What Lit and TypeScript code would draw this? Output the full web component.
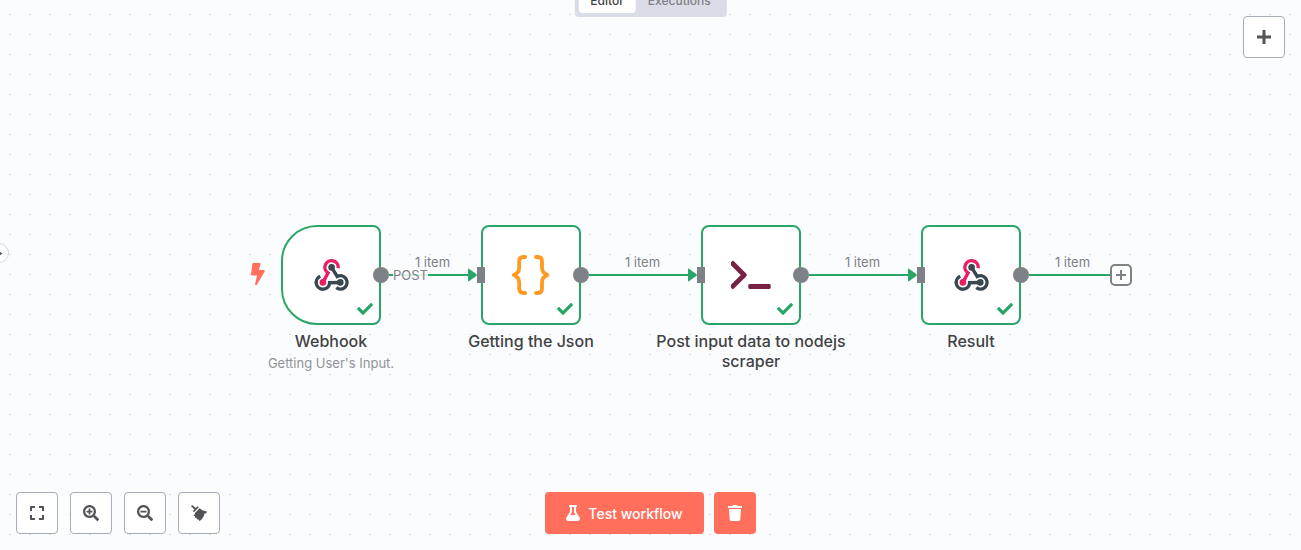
import { LitElement, html, svg, css, nothing } from "lit";
import { customElement, property } from "lit/decorators.js";

type IconName = "webhook" | "code" | "terminal";

interface FlowNode {
  name: string;
  note?: string;
  icon: IconName;
  x: number;
  y: number;
  trigger?: boolean;
}

interface FlowEdge {
  x: number;
  y: number;
  width: number;
  output?: string;
  open?: boolean;
}

const NODES: FlowNode[] = [
  { name: "Webhook", note: "Getting User's Input.", icon: "webhook", x: 281, y: 225, trigger: true },
  { name: "Getting the Json", icon: "code", x: 481, y: 225 },
  { name: "Post input data to nodejs scraper", icon: "terminal", x: 701, y: 225 },
  { name: "Result", icon: "webhook", x: 921, y: 225 },
];

const EDGES: FlowEdge[] = [
  { x: 381, y: 275, width: 104, output: "POST" },
  { x: 581, y: 275, width: 124 },
  { x: 801, y: 275, width: 124 },
  { x: 1021, y: 275, width: 104, open: true },
];

const GLYPHS = {
  bolt: { box: "0 0 320 512", d: "M296 160H180.6l42.6-129.8C227.2 15 215.7 0 200 0H56C44 0 33.8 8.9 32.2 20.8l-32 240C-1.7 275.2 9.5 288 24 288h118.7L96.6 482.5c-3.6 15.2 8 29.5 23.3 29.5 8.4 0 16.4-4.4 20.8-12l176-304c9.3-15.9-2.2-36-20.7-36z" },
  check: { box: "0 0 512 512", d: "M173.898 439.404l-166.4-166.4c-9.997-9.997-9.997-26.206 0-36.204l36.203-36.204c9.997-9.998 26.207-9.998 36.204 0L192 312.69 432.095 72.596c9.997-9.997 26.207-9.997 36.204 0l36.203 36.204c9.997 9.997 9.997 26.206 0 36.204l-294.4 294.401c-9.998 9.997-26.207 9.997-36.204-.001z" },
  expand: { box: "0 0 448 512", d: "M0 180V56c0-13.3 10.7-24 24-24h124c6.6 0 12 5.4 12 12v40c0 6.6-5.4 12-12 12H64v84c0 6.6-5.4 12-12 12H12c-6.6 0-12-5.4-12-12zM288 44v40c0 6.6 5.4 12 12 12h84v84c0 6.6 5.4 12 12 12h40c6.6 0 12-5.4 12-12V56c0-13.3-10.7-24-24-24H300c-6.6 0-12 5.4-12 12zm148 276h-40c-6.6 0-12 5.4-12 12v84h-84c-6.6 0-12 5.4-12 12v40c0 6.6 5.4 12 12 12h124c13.3 0 24-10.7 24-24V332c0-6.6-5.4-12-12-12zM160 468v-40c0-6.6-5.4-12-12-12H64v-84c0-6.6-5.4-12-12-12H12c-6.6 0-12 5.4-12 12v124c0 13.3 10.7 24 24 24h124c6.6 0 12-5.4 12-12z" },
  zoomIn: { box: "0 0 512 512", d: "M304 192v32c0 6.6-5.4 12-12 12h-56v56c0 6.6-5.4 12-12 12h-32c-6.6 0-12-5.4-12-12v-56h-56c-6.6 0-12-5.4-12-12v-32c0-6.6 5.4-12 12-12h56v-56c0-6.6 5.4-12 12-12h32c6.6 0 12 5.4 12 12v56h56c6.6 0 12 5.4 12 12zm201 284.7L476.7 505c-9.4 9.4-24.6 9.4-33.9 0L343 405.3c-4.5-4.5-7-10.6-7-17V372c-35.3 27.6-79.7 44-128 44C93.1 416 0 322.9 0 208S93.1 0 208 0s208 93.1 208 208c0 48.3-16.4 92.7-44 128h16.3c6.4 0 12.5 2.5 17 7l99.7 99.7c9.3 9.4 9.3 24.6 0 34zM344 208c0-75.2-60.8-136-136-136S72 132.8 72 208s60.8 136 136 136 136-60.8 136-136z" },
  zoomOut: { box: "0 0 512 512", d: "M304 192v32c0 6.6-5.4 12-12 12H124c-6.6 0-12-5.4-12-12v-32c0-6.6 5.4-12 12-12h168c6.6 0 12 5.4 12 12zm201 284.7L476.7 505c-9.4 9.4-24.6 9.4-33.9 0L343 405.3c-4.5-4.5-7-10.6-7-17V372c-35.3 27.6-79.7 44-128 44C93.1 416 0 322.9 0 208S93.1 0 208 0s208 93.1 208 208c0 48.3-16.4 92.7-44 128h16.3c6.4 0 12.5 2.5 17 7l99.7 99.7c9.3 9.4 9.3 24.6 0 34zM344 208c0-75.2-60.8-136-136-136S72 132.8 72 208s60.8 136 136 136 136-60.8 136-136z" },
  tidy: { box: "0 0 16 16", d: "M1.1 .1 4.9 3.1 6.7 1.2 7.8 2.3 3 7.2 1.9 6.1 3.6 4.4 0 1.3ZM8.6 3.2 11.2 5.2 15.8 6.4 15.3 8.4 13.7 8.2C13.2 11.4 11.4 14 8.6 16L7.2 14.3 6.2 14.5 5.4 12.8 4.1 12.8 4 11.2 2.4 10.4C3.4 9.9 3.9 9.1 4 8Z" },
  flask: { box: "0 0 448 512", d: "M437.2 403.5L320 215V64h8c13.3 0 24-10.7 24-24V24c0-13.3-10.7-24-24-24H120c-13.3 0-24 10.7-24 24v16c0 13.3 10.7 24 24 24h8v151L10.8 403.5C-18.5 450.6 15.3 512 70.9 512h306.2c55.7 0 89.4-61.5 60.1-108.5zM137.9 320l48.2-77.6c3.7-5.2 5.8-11.6 5.8-18.4V64h64v160c0 6.9 2.2 13.2 5.8 18.4l48.2 77.6h-172z" },
  trash: { box: "0 0 448 512", d: "M432 32H312l-9.4-18.7A24 24 0 0 0 281.1 0H166.8a23.72 23.72 0 0 0-21.4 13.3L136 32H16A16 16 0 0 0 0 48v32a16 16 0 0 0 16 16h416a16 16 0 0 0 16-16V48a16 16 0 0 0-16-16zM53.2 467a48 48 0 0 0 47.9 45h245.8a48 48 0 0 0 47.9-45L416 128H32z" },
  plus: { box: "0 0 16 16", d: "M6.5 1h3v5.5H15v3H9.5V15h-3V9.5H1v-3h5.5z" },
  right: { box: "0 0 16 16", d: "M7 2 15 8 7 14V11H0V5h7z" },
};

const glyph = (name: keyof typeof GLYPHS, size = 16) => html`
  <svg viewBox=${GLYPHS[name].box} height=${size} fill="currentColor" aria-hidden="true">
    <path d=${GLYPHS[name].d}></path>
  </svg>`;

const hook = "M27.2 13.2A6.7 6.7 0 1 0 17 18L11.9 27.4";

const nodeIcons = {
  webhook: svg`
    <g fill="none" stroke-width="3.4">
      <path d=${hook} stroke="#37474f" transform="rotate(-120 20.6 22.4)"></path>
      <path d=${hook} stroke="#37474f" transform="rotate(120 20.6 22.4)"></path>
      <path d=${hook} stroke="#e91e63"></path>
    </g>
    <circle cx="20.6" cy="12.4" r="3.3" fill="#37474f"></circle>
    <circle cx="29.3" cy="27.4" r="3.3" fill="#37474f"></circle>
    <circle cx="11.9" cy="27.4" r="3.3" fill="#e91e63"></circle>`,
  code: svg`
    <g fill="none" stroke="#ff9922" stroke-width="3.8" stroke-linecap="round" stroke-linejoin="round">
      <path d="M14.2 2H12.4Q8.2 2 8.2 6.2V12.5C8.2 16.5 6.5 18.7 2.7 20C6.5 21.3 8.2 23.5 8.2 27.5V33.8Q8.2 38 12.4 38H14.2"></path>
      <path d="M25 2H26.8Q31 2 31 6.2V12.5C31 16.5 32.7 18.7 36.5 20C32.7 21.3 31 23.5 31 27.5V33.8Q31 38 26.8 38H25"></path>
    </g>`,
  terminal: svg`
    <path d="M1.9 8.8 13.2 20 1.9 31.2" fill="none" stroke="#772244" stroke-width="4.8" stroke-linejoin="round" stroke-linecap="square"></path>
    <rect x="17.3" y="29" width="22.4" height="5" rx="1.4" fill="#772244"></rect>`,
};

@customElement("flow-node")
class FlowNodeElement extends LitElement {
  @property({ attribute: false }) node!: FlowNode;

  static styles = css`
    :host { display: block; position: absolute; width: 100px; }
    .card {
      position: relative;
      box-sizing: border-box;
      display: grid;
      place-items: center;
      height: 100px;
      border: 2px solid #29a568;
      border-radius: 8px;
      background: #fff;
    }
    .card.trigger { border-radius: 36px 8px 8px 36px; }
    .picture { width: 40px; height: 40px; }
    .status { position: absolute; right: 6px; bottom: 6px; display: flex; color: #29a568; }
    .bolt { position: absolute; right: 100%; top: 36px; margin-right: 18px; display: flex; color: #ff6f5c; }
    .caption {
      display: flex;
      flex-direction: column;
      gap: 4px;
      align-items: center;
      width: 200px;
      margin: 6px -50px 0;
      text-align: center;
    }
    .name { font-size: 16px; line-height: 20px; font-weight: 500; color: #414244; }
    .note { font-size: 13px; line-height: 16px; color: #909298; }
    svg { display: block; }
  `;

  render() {
    const { name, note, icon, trigger } = this.node;
    return html`
      <div class="card ${trigger ? "trigger" : ""}">
        ${trigger ? html`<span class="bolt">${glyph("bolt", 22)}</span>` : nothing}
        <svg class="picture" viewBox="0 0 40 40" aria-hidden="true">${nodeIcons[icon]}</svg>
        <span class="status">${glyph("check")}</span>
      </div>
      <div class="caption">
        <span class="name">${name}</span>
        ${note ? html`<span class="note">${note}</span>` : nothing}
      </div>`;
  }
}

@customElement("flow-edge")
class FlowEdgeElement extends LitElement {
  @property({ attribute: false }) edge!: FlowEdge;

  static styles = css`
    :host {
      display: flex;
      align-items: center;
      position: absolute;
      height: 24px;
      margin: -12px 0 0 -8px;
      box-sizing: border-box;
      font-size: 13px;
      line-height: 16px;
      color: #7e8186;
    }
    .out { width: 16px; height: 16px; border-radius: 50%; background: #7e8186; }
    .line { flex: 1; height: 2px; background: #29a568; }
    .arrow { width: 9px; height: 14px; fill: #29a568; }
    .in { width: 8px; height: 16px; background: #7e8186; }
    .count { position: absolute; left: 7px; right: 0; bottom: 17px; text-align: center; }
    .output { position: absolute; left: 20px; background: rgba(251, 252, 254, 0.85); }
    .add {
      display: grid;
      place-items: center;
      box-sizing: border-box;
      width: 22px;
      height: 22px;
      margin-right: -7px;
      padding: 0;
      border: 2px solid #7e8186;
      border-radius: 5px;
      background: #fff;
      color: #7e8186;
    }
    .add svg { display: block; }
  `;

  render() {
    const { output, open } = this.edge;
    return html`
      <span class="out"></span>
      <span class="line"></span>
      ${open
        ? html`<button class="add" aria-label="Add node">
            <svg width="10" height="10" viewBox="0 0 10 10" stroke="currentColor" stroke-width="2" aria-hidden="true">
              <path d="M5 0V10M0 5H10"></path>
            </svg>
          </button>`
        : html`<svg class="arrow" viewBox="0 0 9 14" aria-hidden="true">
              <path d="M0 1.6Q0 0 1.3 .9L8.5 6.2Q9.4 7 8.5 7.8L1.3 13.1Q0 14 0 12.4Z"></path>
            </svg>
            <span class="in"></span>`}
      <span class="count">1 item</span>
      ${output ? html`<span class="output">${output}</span>` : nothing}`;
  }
}

@customElement("app-root")
class AppRoot extends LitElement {
  static styles = css`
    :host {
      display: block;
      position: relative;
      height: 100vh;
      overflow: hidden;
      font-family: Inter, "Liberation Sans", sans-serif;
      background: #fbfcfe;
    }
    .canvas { position: absolute; inset: 0; }
    .grid { display: block; width: 100%; height: 100%; }
    .overlay {
      position: relative;
      box-sizing: border-box;
      display: flex;
      flex-direction: column;
      justify-content: space-between;
      height: 100%;
      padding: 16px;
      pointer-events: none;
    }
    .top { display: flex; justify-content: flex-end; }
    .bottom { display: grid; grid-template-columns: 1fr auto 1fr; align-items: end; }
    .tools { display: flex; gap: 12px; }
    .actions { display: flex; gap: 10px; }
    button { font: inherit; cursor: pointer; pointer-events: auto; }
    svg { display: block; }
    .square {
      display: grid;
      place-items: center;
      box-sizing: border-box;
      width: 42px;
      height: 42px;
      padding: 0;
      border: 1px solid #a6abbb;
      border-radius: 4px;
      background: #fff;
      color: #525356;
    }
    .primary {
      display: flex;
      align-items: center;
      justify-content: center;
      gap: 8px;
      height: 42px;
      padding: 0 21px;
      border: 0;
      border-radius: 4px;
      background: #ff6f5c;
      color: #fff;
      font-size: 14px;
      font-weight: 500;
    }
    .primary.small { width: 42px; padding: 0; }
    .tabs {
      position: absolute;
      left: 50%;
      top: 0;
      transform: translate(-50%, -13px);
      display: flex;
      padding: 4px;
      border-radius: 4px;
      background: #dadde8;
    }
    .tab {
      height: 22px;
      padding: 0 12px 3px;
      border: 0;
      border-radius: 4px;
      background: none;
      font-size: 12px;
      font-weight: 500;
      color: #7e8186;
    }
    .tab.active { background: #fff; color: #414244; }
    .panel {
      position: absolute;
      left: -11px;
      top: 243px;
      display: flex;
      align-items: center;
      justify-content: flex-end;
      box-sizing: border-box;
      width: 20px;
      height: 20px;
      padding: 0 5px 0 0;
      border: 1px solid #d0d3de;
      border-radius: 50%;
      background: #fff;
      color: #525356;
    }
  `;

  render() {
    return html`
      <div class="canvas">
        <svg class="grid" aria-hidden="true">
          <defs>
            <pattern id="dots" width="20" height="20" patternUnits="userSpaceOnUse">
              <rect x="9" y="14" width="2" height="1" fill="#dcdde0"></rect>
            </pattern>
          </defs>
          <rect width="100%" height="100%" fill="url(#dots)"></rect>
        </svg>
        ${NODES.map((n) => html`<flow-node .node=${n} style="left:${n.x}px;top:${n.y}px"></flow-node>`)}
        ${EDGES.map((e) => html`<flow-edge .edge=${e} style="left:${e.x}px;top:${e.y}px;width:${e.width + 8}px"></flow-edge>`)}
      </div>
      <div class="overlay">
        <div class="top">
          <button class="square" aria-label="Add node">${glyph("plus")}</button>
        </div>
        <div class="bottom">
          <div class="tools">
            <button class="square" aria-label="Zoom to fit">${glyph("expand")}</button>
            <button class="square" aria-label="Zoom in">${glyph("zoomIn")}</button>
            <button class="square" aria-label="Zoom out">${glyph("zoomOut")}</button>
            <button class="square" aria-label="Tidy up">${glyph("tidy")}</button>
          </div>
          <div class="actions">
            <button class="primary">${glyph("flask")}<span>Test workflow</span></button>
            <button class="primary small" aria-label="Clear execution">${glyph("trash")}</button>
          </div>
        </div>
      </div>
      <nav class="tabs">
        <button class="tab active">Editor</button>
        <button class="tab">Executions</button>
      </nav>
      <button class="panel" aria-label="Expand menu">${glyph("right", 9)}</button>`;
  }
}
